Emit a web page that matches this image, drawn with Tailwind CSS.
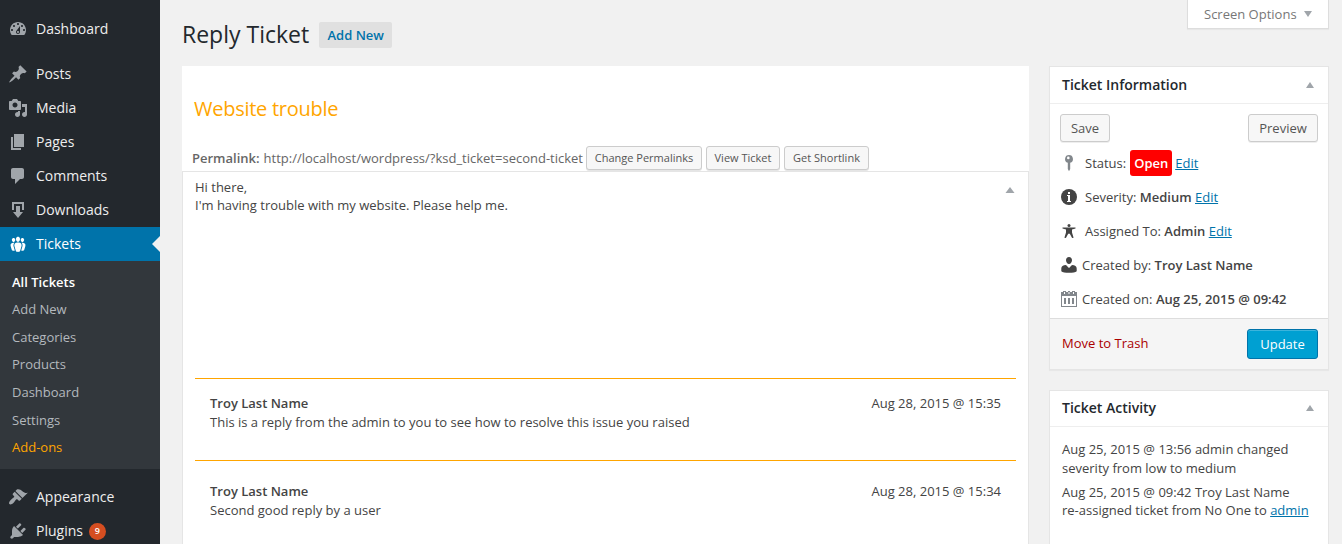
<!DOCTYPE html>
<html lang="en">
<head>
<meta charset="utf-8">
<title>Reply Ticket</title>
<script src="https://cdn.jsdelivr.net/npm/@tailwindcss/browser@4"></script>
</head>
<body class="flex h-[544px] w-[1342px] overflow-hidden bg-[#f1f1f1] font-['Open_Sans',sans-serif] text-[13px] leading-[18px] text-[#444]">

<nav class="w-40 shrink-0 bg-[#23282d] pt-3 text-sm text-[#eee]">
  <a class="mb-[11px] flex h-[34px] items-center gap-2 pl-2"><svg class="size-5 fill-[#a0a5aa]" viewBox="0 0 20 20"><path d="M3.76 16h12.48c1.1-1.37 1.76-3.11 1.76-5 0-4.42-3.58-8-8-8s-8 3.58-8 8c0 1.89.66 3.63 1.76 5zM10 4c.55 0 1 .45 1 1s-.45 1-1 1-1-.45-1-1 .45-1 1-1zM6 6c.55 0 1 .45 1 1s-.45 1-1 1-1-.45-1-1 .45-1 1-1zm8 0c.55 0 1 .45 1 1s-.45 1-1 1-1-.45-1-1 .45-1 1-1zm-5.37 5.55L12 7v6c0 1.1-.9 2-2 2s-2-.9-2-2c0-.57.24-1.08.63-1.45zM4 10c.55 0 1 .45 1 1s-.45 1-1 1-1-.45-1-1 .45-1 1-1zm12 0c.55 0 1 .45 1 1s-.45 1-1 1-1-.45-1-1 .45-1 1-1zm-5 3c0-.55-.45-1-1-1s-1 .45-1 1 .45 1 1 1 1-.45 1-1z"/></svg><span>Dashboard</span></a>
  <a class="flex h-[34px] items-center gap-2 pl-2"><svg class="size-5 fill-[#a0a5aa]" viewBox="0 0 20 20"><path d="M10.44 3.02l1.82-1.82 6.36 6.35-1.83 1.82c-1.05-.68-2.48-.57-3.41.36l-.75.75c-.92.93-1.04 2.35-.35 3.41l-1.83 1.82-2.41-2.41-2.8 2.79c-.42.42-3.38 2.71-3.8 2.29s1.86-3.39 2.28-3.81l2.79-2.79L4.1 9.36l1.83-1.82c1.05.69 2.48.57 3.4-.36l.75-.75c.93-.92 1.05-2.35.36-3.41z"/></svg><span>Posts</span></a>
  <a class="flex h-[34px] items-center gap-2 pl-2"><svg class="size-5 fill-[#a0a5aa]" viewBox="0 0 20 20"><path d="M13 11V4c0-.55-.45-1-1-1h-1.67L9 1H5L3.67 3H2c-.55 0-1 .45-1 1v7c0 .55.45 1 1 1h10c.55 0 1-.45 1-1zM7 4.5c1.38 0 2.5 1.12 2.5 2.5S8.38 9.5 7 9.5 4.5 8.38 4.5 7 5.62 4.5 7 4.5zM14 6h5v10.5c0 1.38-1.12 2.5-2.5 2.5S14 17.88 14 16.5s1.12-2.5 2.5-2.5c.17 0 .34.02.5.05V9h-3V6zm-4 8.05V13h2v3.5c0 1.38-1.12 2.5-2.5 2.5S7 17.88 7 16.5 8.12 14 9.5 14c.17 0 .34.02.5.05z" fill-rule="evenodd"/></svg><span>Media</span></a>
  <a class="flex h-[34px] items-center gap-2 pl-2"><svg class="size-5 fill-[#a0a5aa]" viewBox="0 0 20 20"><path d="M6 15V2h10v13H6zm-1 1h8v2H3V5h2v11z"/></svg><span>Pages</span></a>
  <a class="flex h-[34px] items-center gap-2 pl-2"><svg class="size-5 fill-[#a0a5aa]" viewBox="0 0 20 20"><path d="M5 2h9c1.1 0 2 .9 2 2v7c0 1.1-.9 2-2 2h-2l-5 5v-5H5c-1.1 0-2-.9-2-2V4c0-1.1.9-2 2-2z"/></svg><span>Comments</span></a>
  <a class="flex h-[34px] items-center gap-2 pl-2"><svg class="size-5 fill-[#a0a5aa]" viewBox="0 0 20 20"><path d="M14.01 4v6h2V2H4v8h2.01V4h8zm-2 2v6h3l-5 6-5-6h3V6h4z"/></svg><span>Downloads</span></a>
  <a class="flex h-[34px] items-center gap-2 bg-[#0073aa] pl-2 text-white"><svg class="size-5 fill-white" viewBox="0 0 20 20"><path d="M8.03 4.46c-.29 1.28.55 3.46 1.97 3.46 1.41 0 2.25-2.18 1.96-3.46-.22-.98-1.08-1.63-1.96-1.63-.89 0-1.74.65-1.97 1.63zm-4.13.9c-.25 1.08.47 2.93 1.67 2.93s1.92-1.85 1.67-2.93c-.19-.83-.92-1.39-1.67-1.39s-1.48.56-1.67 1.39zm8.86 0c-.25 1.08.47 2.93 1.66 2.93 1.2 0 1.92-1.85 1.67-2.93-.19-.83-.92-1.39-1.67-1.39-.74 0-1.47.56-1.66 1.39zm-.59 11.43l1.25-4.3C14.2 10 12.71 8.47 10 8.47c-2.72 0-4.21 1.53-3.44 4.02l1.26 4.3C8.05 17.51 9 18 10 18c.98 0 1.94-.49 2.17-1.21z"/><path id="member" d="M6.100 9.130c-.49.67-.96 1.83-.42 3.59l1.120 3.790c-.34.2-.77.310-1.200.310-.85 0-1.650-.410-1.850-1.030l-1.070-3.650c-.65-2.110.61-3.400 2.920-3.400.27 0 .54.02.79.06z"/><use href="#member" transform="matrix(-1 0 0 1 20 0)"/></svg><span>Tickets</span><svg class="ml-auto h-4 w-2 fill-[#f1f1f1]" viewBox="0 0 8 16"><path d="M8 0v16L0 8z"/></svg></a>
  <div class="flex h-52 flex-col bg-[#32373c] pt-[7.7px] pl-3 text-[13px] text-[#b4b9be]">
    <a class="h-[27.6px] leading-[27.6px] font-semibold text-white">All Tickets</a>
    <a class="h-[27.6px] leading-[27.6px]">Add New</a>
    <a class="h-[27.6px] leading-[27.6px]">Categories</a>
    <a class="h-[27.6px] leading-[27.6px]">Products</a>
    <a class="h-[27.6px] leading-[27.6px]">Dashboard</a>
    <a class="h-[27.6px] leading-[27.6px]">Settings</a>
    <a class="h-[27.6px] leading-[27.6px] text-[#ffa500]">Add-ons</a>
  </div>
  <a class="mt-[11px] flex h-[34px] items-center gap-2 pl-2"><svg class="size-5 fill-[#a0a5aa]" viewBox="0 0 20 20"><path d="M14.48 11.06L7.41 3.99l1.5-1.5c.5-.56 2.3-.47 3.51.32 1.21.8 1.43 1.28 2.91 2.1 1.18.64 2.45 1.26 4.45.85zm-.71.71L6.7 4.7 4.93 6.47c-.39.39-.39 1.02 0 1.41l1.06 1.06c.39.39.39 1.03 0 1.42-.6.6-1.43 1.11-2.21 1.69-.35.26-.7.53-1.01.84C1.43 14.23.4 16.08 1.4 17.07c.99 1 2.84-.03 4.18-1.36.31-.31.58-.66.85-1.02.57-.78 1.08-1.61 1.69-2.21.39-.39 1.02-.39 1.41 0l1.06 1.06c.39.39 1.02.39 1.41 0z"/></svg><span>Appearance</span></a>
  <a class="flex h-[34px] items-center gap-2 pl-2"><svg class="size-5 fill-[#a0a5aa]" viewBox="0 0 20 20"><path d="M13.11 4.36L9.87 7.6 8 5.73l3.24-3.24c.35-.34 1.05-.2 1.56.32.52.51.66 1.21.31 1.55zm-8 1.77l.91-1.12 9.01 9.01-1.19.84c-.71.71-2.63 1.16-3.82 1.16H6.14L4.9 17.26c-.59.59-1.54.59-2.12 0-.59-.58-.59-1.53 0-2.12L4 13.9V10.1c0-1.19.4-3.26 1.11-3.97zm7.26 3.97l3.24-3.24c.34-.35 1.04-.21 1.55.31.52.51.66 1.21.31 1.55l-3.24 3.25z"/></svg><span>Plugins</span><span class="-ml-[2px] flex size-[17px] items-center justify-center rounded-full bg-[#d54e21] text-[9px] font-semibold text-white">9</span></a>
</nav>

<main class="ml-[22px] flex w-[847px] shrink-0 flex-col">
  <header class="flex h-[66px] items-start gap-[10px] pt-[21px]">
    <h1 class="text-[23px] leading-[26px] text-[#23282d]">Reply Ticket</h1>
    <a class="mt-px flex h-[26px] w-[73px] items-center justify-center rounded-xs bg-[#e0e0e0] font-semibold text-[#0073aa]">Add New</a>
  </header>
  <section class="h-[105px] bg-white">
    <h2 class="h-20 pt-[29px] pl-3 text-xl leading-7 tracking-[-0.26px] text-[#ffa500]">Website trouble</h2>
    <div class="flex h-6 items-center pl-[10px] text-[#666]">
      <b class="mr-1 font-semibold">Permalink:</b><span class="mr-[3px]">http://localhost/wordpress/?ksd_ticket=second-ticket</span>
      <a class="mr-1 flex h-6 w-[116px] items-center justify-center rounded-[3px] border border-[#ccc] bg-[#f7f7f7] text-[11px] text-[#555] shadow-[0_1px_0_#e5e5e5]">Change Permalinks</a>
      <a class="mr-1 flex h-6 w-[74px] items-center justify-center rounded-[3px] border border-[#ccc] bg-[#f7f7f7] text-[11px] text-[#555] shadow-[0_1px_0_#e5e5e5]">View Ticket</a>
      <a class="flex h-6 w-[85px] items-center justify-center rounded-[3px] border border-[#ccc] bg-[#f7f7f7] text-[11px] text-[#555] shadow-[0_1px_0_#e5e5e5]">Get Shortlink</a>
    </div>
  </section>
  <section class="flex-1 border border-b-0 border-[#e5e5e5] bg-white px-3">
    <div class="flex h-[206px] justify-between pt-[6px]">
      <p>Hi there,<br>I'm having trouble with my website. Please help me.</p>
      <svg class="mt-[9px] mr-[1px] h-[6px] w-[10px] fill-[#a0a5aa]" viewBox="0 0 10 6"><path d="M5 0l4.5 6h-9z"/></svg>
    </div>
    <article class="h-[82px] border-t border-[#ffa500] px-[15px] pt-[15px]">
      <div class="flex justify-between leading-[19px]"><b class="font-semibold">Troy Last Name</b><time>Aug 28, 2015 @ 15:35</time></div>
      <p>This is a reply from the admin to you to see how to resolve this issue you raised</p>
    </article>
    <article class="border-t border-[#ffa500] px-[15px] pt-[21px]">
      <div class="flex justify-between leading-[19px]"><b class="font-semibold">Troy Last Name</b><time>Aug 28, 2015 @ 15:34</time></div>
      <p>Second good reply by a user</p>
    </article>
  </section>
</main>

<aside class="ml-5 flex w-[280px] shrink-0 flex-col">
  <div class="mb-9 flex h-[30px] justify-end">
    <a class="flex h-[29px] w-[142px] items-center border border-t-0 border-[#ddd] bg-white pl-4 text-[#777] shadow-[0_1px_1px_rgba(0,0,0,0.04)]">Screen Options<svg class="ml-[7px] h-[6px] w-2 fill-[#a0a5aa]" viewBox="0 0 8 6"><path d="M0 0h8L4 6z"/></svg></a>
  </div>
  <section class="mb-5 h-[304px] border border-[#e5e5e5] bg-white shadow-[0_1px_1px_rgba(0,0,0,0.04)]">
    <h3 class="flex h-[37px] items-center justify-between border-b border-[#eee] pr-[14px] pl-3 text-sm font-semibold text-[#23282d]">Ticket Information<svg class="h-[6px] w-2 fill-[#a0a5aa]" viewBox="0 0 8 6"><path d="M4 0l4 6H0z"/></svg></h3>
    <div class="flex h-[42px] items-end justify-between px-[10px] pb-1">
      <a class="flex h-7 w-[50px] items-center justify-center rounded-[3px] border border-[#ccc] bg-[#f7f7f7] text-[#555] shadow-[0_1px_0_#eee]">Save</a>
      <a class="flex h-7 w-[70px] items-center justify-center rounded-[3px] border border-[#ccc] bg-[#f7f7f7] text-[#555] shadow-[0_1px_0_#eee]">Preview</a>
    </div>
    <ul>
      <li class="flex h-[34px] items-center pl-[9px]"><svg class="mr-[6px] size-5 fill-[#82878c]" viewBox="0 0 20 20"><path fill-rule="evenodd" d="M10 2a4 4 0 0 1 1.200 7.800V16L10 18.200 8.800 16V9.800A4 4 0 0 1 10 2zM9.300 3.600a1.300 1.300 0 0 0 0 2.600A1.300 1.300 0 0 0 9.300 3.600z"/></svg><span>Status:</span><b class="mr-[3px] ml-1 flex h-[26px] w-[42px] items-center justify-center rounded-[3px] bg-[#f00] font-semibold text-white">Open</b><a class="text-[#0073aa] underline">Edit</a></li>
      <li class="flex h-[34px] items-center gap-[6px] pl-[9px]"><svg class="size-5" viewBox="0 0 20 20"><circle cx="10" cy="10" r="8" fill="#444"/><path fill="#fff" d="M9 5h2v2H9zM8 8h3v6h1v1H8v-1h1V9H8z"/></svg><span>Severity: <b class="font-semibold">Medium</b> <a class="text-[#0073aa] underline">Edit</a></span></li>
      <li class="flex h-[34px] items-center gap-[6px] pl-[9px]"><svg class="size-5 fill-[#444]" viewBox="0 0 20 20"><circle cx="10" cy="4.500" r="1.500"/><path d="M3.500 6.500h13v1L13 8.500v3l1.600 5.200-1.500.4-2.300-4.300H9.200l-2.300 4.300-1.500-.4L7 11.500v-3l-3.500-1z"/></svg><span>Assigned To: <b class="font-semibold">Admin</b> <a class="text-[#0073aa] underline">Edit</a></span></li>
      <li class="flex h-[34px] items-center gap-[3px] pl-[9px]"><svg class="size-5 fill-[#444]" viewBox="0 0 20 20"><path d="M10 2c1.900 0 3 1.400 3 3.200S11.700 9 10 9 7 7 7 5.200 8.100 2 10 2zM7 10l3 3 3-3c3 .2 4.700 1.200 4.700 3.400v2.800c-1.200 1-4 1.600-7.700 1.600s-6.500-.6-7.700-1.600v-2.800C2.300 11.200 4 10.200 7 10z"/></svg><span>Created by: <b class="font-semibold">Troy Last Name</b></span></li>
      <li class="flex h-[34px] items-center gap-[3px] pl-[9px]"><svg class="size-5" viewBox="0 0 20 20"><path fill="#82878c" fill-rule="evenodd" d="M2 3h2V2h3v1h2V2h2v1h2V2h3v1h2v15H2zM3 7v10h14V7zM5 3v2h1V3zm4.500 0v2h1V3zM14 3v2h1V3zM5 9h2v6H5zm4 0h2v6H9zm4 0h2v6h-2z"/></svg><span>Created on: <b class="font-semibold">Aug 25, 2015 @ 09:42</b></span></li>
    </ul>
    <footer class="mt-[2px] flex h-[51px] items-center justify-between border-t border-[#ddd] bg-[#f5f5f5] pr-[10px] pl-3">
      <a class="pb-[2px] text-[#a00]">Move to Trash</a>
      <a class="flex h-[30px] w-[71px] items-center justify-center rounded-[3px] border border-[#0073aa] bg-[#00a0d2] text-white shadow-[inset_0_1px_0_rgba(120,200,230,0.5)]">Update</a>
    </footer>
  </section>
  <section class="flex-1 border border-b-0 border-[#e5e5e5] bg-white">
    <h3 class="flex h-9 items-center justify-between border-b border-[#eee] pr-[14px] pl-3 text-sm font-semibold text-[#23282d]"><span class="pb-[2px]">Ticket Activity</span><svg class="mb-px h-[6px] w-2 fill-[#a0a5aa]" viewBox="0 0 8 6"><path d="M4 0l4 6H0z"/></svg></h3>
    <div class="flex flex-col gap-[6px] pt-[13px] pl-3 whitespace-nowrap">
      <p class="leading-[18.5px]">Aug 25, 2015 @ 13:56 admin changed<br>severity from low to medium</p>
      <p>Aug 25, 2015 @ 09:42 Troy Last Name<br>re-assigned ticket from No One to <a class="text-[#0073aa] underline">admin</a></p>
    </div>
  </section>
</aside>
</body>
</html>
